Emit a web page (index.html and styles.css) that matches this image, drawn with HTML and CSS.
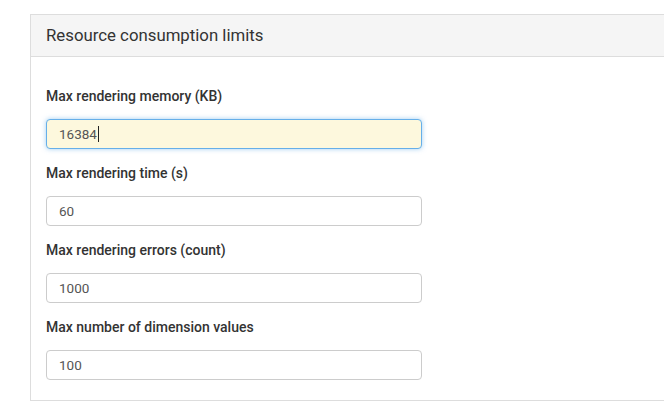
FILE: index.html
```html
<!DOCTYPE html>
<html>
<head>
<meta charset="utf-8">
<link rel="stylesheet" href="styles.css">
</head>
<body>
<div class="page">
  <section class="panel">
    <header class="panel-heading">Resource consumption limits</header>
    <div class="panel-body">
      <div class="form-group">
        <label class="label">Max rendering memory (KB)</label>
        <div class="field focused"><span>16384</span><span class="caret"></span></div>
      </div>
      <div class="form-group">
        <label class="label">Max rendering time (s)</label>
        <div class="field"><span>60</span></div>
      </div>
      <div class="form-group">
        <label class="label">Max rendering errors (count)</label>
        <div class="field"><span>1000</span></div>
      </div>
      <div class="form-group">
        <label class="label">Max number of dimension values</label>
        <div class="field"><span>100</span></div>
      </div>
    </div>
  </section>
</div>
</body>
</html>
```

FILE: styles.css
```css
html, body {
  margin: 0;
  padding: 0;
  background: #fff;
  overflow: hidden;
  width: 664px;
  height: 412px;
}
body {
  font-family: Roboto, "Liberation Sans", Arial, sans-serif;
  color: #333;
}
.page {
  padding: 14px 0 0 30px;
}
.panel {
  border: 1px solid #ddd;
  border-right: none;
  background: #fff;
}
.panel-heading {
  background: #f5f5f5;
  border-bottom: 1px solid #ddd;
  padding: 10px 15px;
  font-size: 16.8px;
  line-height: 21px;
  color: #333;
}
.panel-body {
  padding: 30px 15px 20px;
  display: flex;
  flex-direction: column;
  gap: 15px;
}
.form-group {
  display: flex;
  flex-direction: column;
  gap: 13px;
}
.label {
  font-size: 14px;
  line-height: 19px;
  font-weight: 500;
  color: #333;
}
.field {
  box-sizing: border-box;
  width: 376px;
  height: 30px;
  border: 1px solid #ccc;
  border-radius: 4px;
  padding: 0 12px;
  font-size: 13.5px;
  color: #555;
  display: flex;
  align-items: center;
  background: #fff;
}
.field.focused {
  background: #fdf8dd;
  border-color: #66afe9;
  box-shadow: 0 0 5px rgba(102, 175, 233, 0.6);
}
.caret {
  display: inline-block;
  width: 1px;
  height: 16px;
  background: #222;
  margin-left: 1px;
}
```
